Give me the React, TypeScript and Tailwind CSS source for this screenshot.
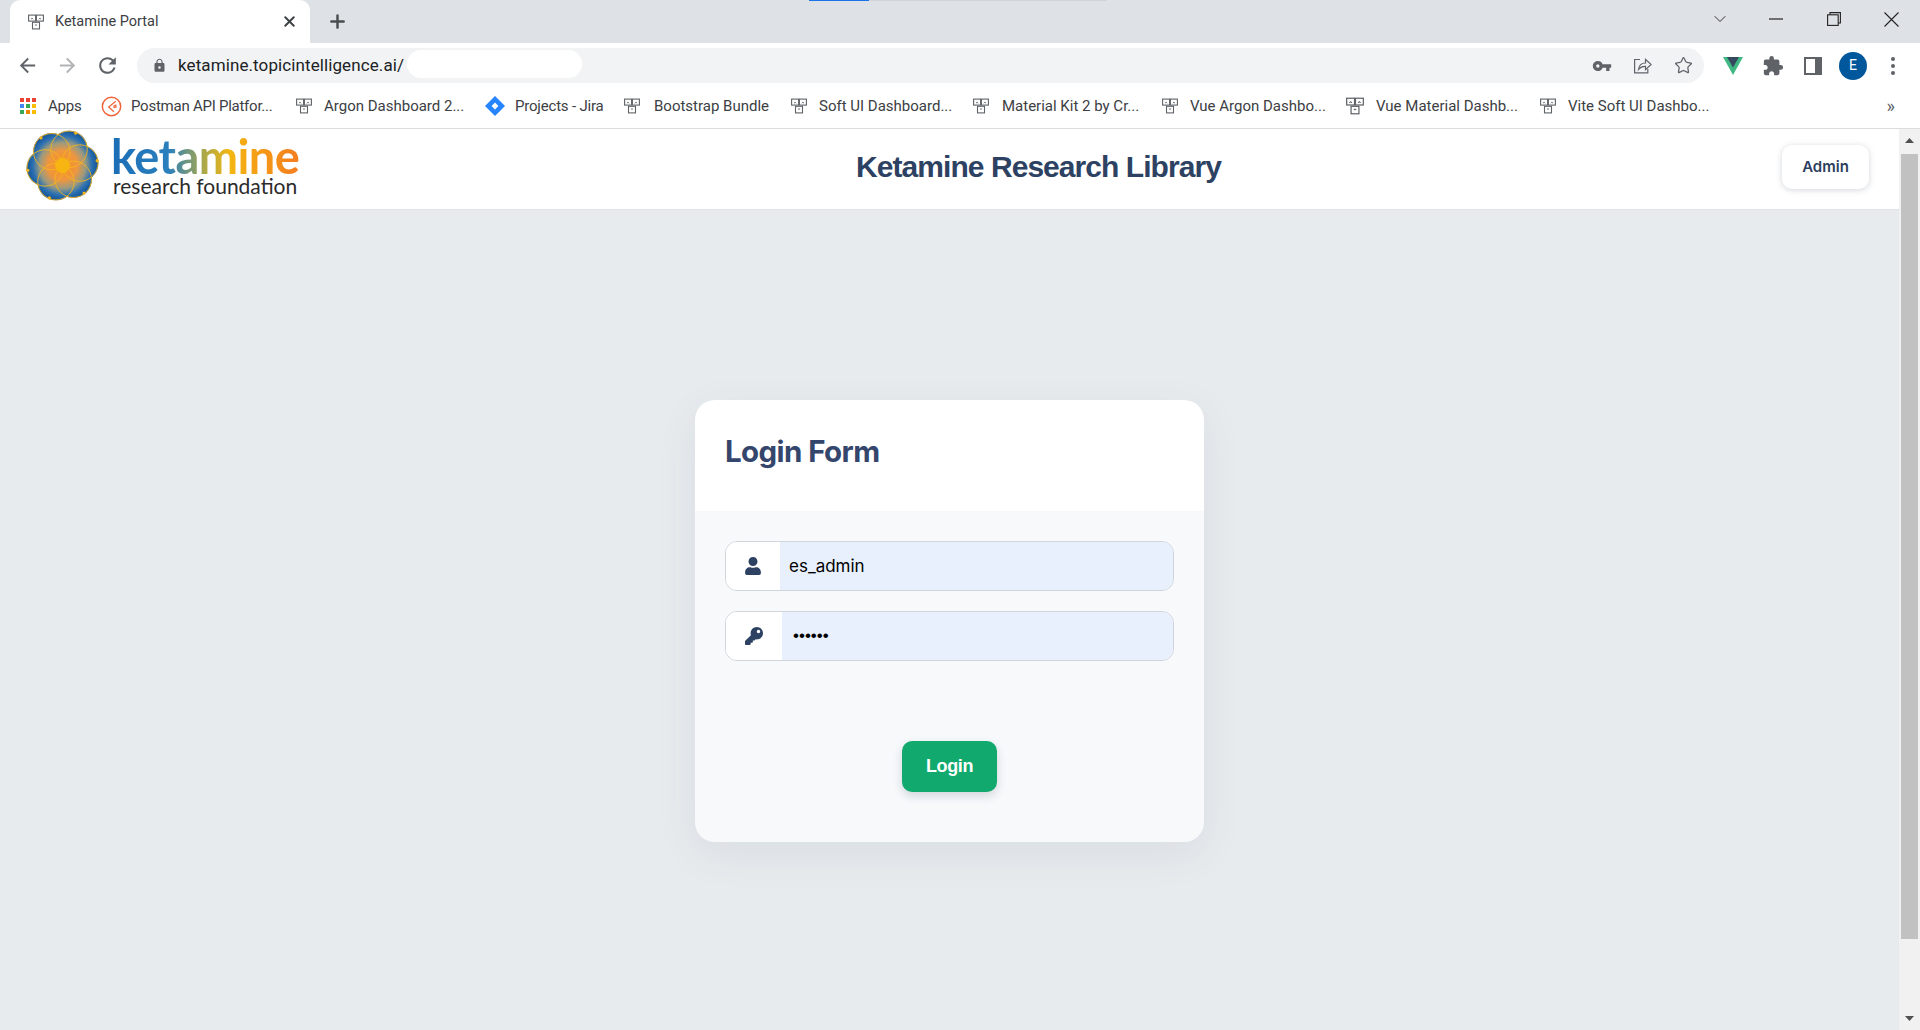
import { FaKey, FaUser } from "react-icons/fa";
import { MdArrowBack, MdArrowForward, MdExtension, MdLock, MdRefresh, MdVpnKey } from "react-icons/md";
import { Star, X, Plus, ChevronDown } from "lucide-react";

function Fav({ className = "" }: { className?: string }) {
  return (
    <svg viewBox="0 0 16 16" className={"w-4 h-4 shrink-0 " + className} fill="none" stroke="#5f6368" strokeWidth="1.1">
      <rect x="0.6" y="1.1" width="7" height="6" fill="#fff" />
      <rect x="8.4" y="1.1" width="7" height="6" fill="#fff" />
      <rect x="4.5" y="8.3" width="7" height="6.6" fill="#fff" />
      <path d="M3 5.200l1.100-1 1.100 1M10.800 5.200l1.100-1 1.100 1M6.900 10.500l1.100 1 1.100-1" strokeWidth="0.9" />
    </svg>
  );
}

function Apps() {
  const colors = ["#ea4335", "#ea4335", "#ea4335", "#4285f4", "#34a853", "#fbbc04", "#34a853", "#ea8600", "#fbbc04"];
  return (
    <div className="grid grid-cols-3 gap-[2px] w-[16px] shrink-0">
      {colors.map((c, i) => (
        <span key={i} style={{ background: c }} className="w-[4px] h-[4px]" />
      ))}
    </div>
  );
}

function Postman() {
  return (
    <svg viewBox="0 0 22 22" className="w-[21px] h-[21px] shrink-0" fill="none" stroke="#f0643c" strokeWidth="1.6">
      <circle cx="11" cy="11" r="9.600" />
      <path d="M15.500 5.500L8 11.500l5.500 5M13.500 10.500l2-1 .3 2-2 .5z" strokeWidth="1.300" />
    </svg>
  );
}

function Jira() {
  return (
    <svg viewBox="0 0 20 20" className="w-5 h-5 shrink-0">
      <path d="M10 0l10 10-10 10L0 10z" fill="#2684ff" />
      <path d="M10 6.600L13.400 10 10 13.400 6.600 10z" fill="#fff" />
    </svg>
  );
}

const bookmarks = [
  { icon: <Apps />, label: "Apps", cls: "ml-[20px] w-[81px] gap-[12px] tracking-[-0.2px]" },
  { icon: <Postman />, label: "Postman API Platfor...", cls: "w-[195px] gap-[9px] tracking-[-0.25px]" },
  { icon: <Fav />, label: "Argon Dashboard 2...", cls: "w-[189px] gap-[12px]" },
  { icon: <Jira />, label: "Projects - Jira", cls: "w-[139px] gap-[10px] tracking-[-0.2px]" },
  { icon: <Fav />, label: "Bootstrap Bundle", cls: "w-[167px] gap-[14px]" },
  { icon: <Fav />, label: "Soft UI Dashboard...", cls: "w-[182px] gap-[12px]" },
  { icon: <Fav />, label: "Material Kit 2 by Cr...", cls: "w-[189px] gap-[13px]" },
  { icon: <Fav />, label: "Vue Argon Dashbo...", cls: "w-[184px] gap-[12px]" },
  { icon: <Fav className="w-[18px]! h-[18px]!" />, label: "Vue Material Dashb...", cls: "w-[194px] gap-[12px]" },
  { icon: <Fav />, label: "Vite Soft UI Dashbo...", cls: "w-[170px] gap-[12px]" },
];

function Logo() {
  const petals = [0, 60, 120, 180, 240, 300].map((a) => {
    const r = ((a - 8) * Math.PI) / 180;
    return { x: 36.5 + 17.5 * Math.cos(r), y: 36.5 + 17.5 * Math.sin(r) };
  });
  return (
    <svg viewBox="0 0 73 73" className="w-[73px] h-[73px] shrink-0 -mt-[3px]">
      <defs>
        <radialGradient id="lg" gradientUnits="userSpaceOnUse" cx="36.5" cy="36.5" r="37">
          <stop offset="0" stopColor="#f7941d" />
          <stop offset="0.4" stopColor="#ee9640" />
          <stop offset="0.62" stopColor="#9a9a80" />
          <stop offset="0.8" stopColor="#2a70b2" />
          <stop offset="1" stopColor="#0f4c8c" />
        </radialGradient>
      </defs>
      {petals.map((p, i) => (
        <circle key={i} cx={p.x} cy={p.y} r="18.6" fill="url(#lg)" />
      ))}
      <circle cx="36.5" cy="36.5" r="20" fill="url(#lg)" />
      {petals.map((p, i) => (
        <circle key={i} cx={p.x} cy={p.y} r="18.2" fill="none" stroke="#f5b51c" strokeWidth="0.9" />
      ))}
      <circle cx="36.5" cy="36.5" r="7.5" fill="#f7b512" />
      {petals.map((p, i) => (
        <circle key={i} cx={36.5 + (p.x - 36.5) * 2} cy={36.5 + (p.y - 36.5) * 2} r="1.6" fill="#f5b51c" />
      ))}
    </svg>
  );
}

function Cell({ children, cls }: { children: React.ReactNode; cls: string }) {
  return <div className={"flex items-center justify-center bg-white shrink-0 " + cls}>{children}</div>;
}

export default function App() {
  return (
    <div className="relative h-[1030px] w-full overflow-hidden flex flex-col bg-white font-['Roboto',sans-serif]">
      {/* tab strip */}
      <div className="relative h-[43px] shrink-0 bg-[#dee1e6] flex items-end pl-[10px]">
        <div className="h-[43px] w-[300px] bg-white rounded-t-[10px] flex items-center pl-[18px] pr-[12px]">
          <Fav />
          <span className="ml-[11px] text-[14.5px] text-[#3c4043]">Ketamine Portal</span>
          <X className="ml-auto w-[17px] h-[17px] text-[#3c4043]" strokeWidth={2.8} />
        </div>
        <div className="h-[43px] flex items-center ml-[17px]">
          <Plus className="w-[21px] h-[21px] text-[#4a4d50]" strokeWidth={2.8} />
        </div>
        <div className="ml-auto h-[43px] flex items-center pb-[5px]">
          <ChevronDown className="w-[20px] h-[20px] text-[#222222] mr-[39px]" strokeWidth={1.1} />
          <svg viewBox="0 0 14 14" className="w-[14px] h-[14px] mr-[44px]" stroke="#222" fill="none"><path d="M0 7h14" strokeWidth="1.2" /></svg>
          <svg viewBox="0 0 14 14" className="w-[14px] h-[14px] mr-[43px]" stroke="#222" fill="none" strokeWidth="1.1"><rect x="0.6" y="2.8" width="10.6" height="10.6" /><path d="M3 2.8V.6h10.4V11h-2.2" /></svg>
          <svg viewBox="0 0 15 15" className="w-[15px] h-[15px] mr-[21px]" stroke="#222" fill="none" strokeWidth="1.1"><path d="M.5.5l14 14M14.500.5l-14 14" /></svg>
        </div>
        <div className="absolute top-0 left-[809px] h-[1px] w-[60px] bg-[#1a73e8]" />
        <div className="absolute top-0 left-[869px] h-[1px] w-[238px] bg-[#d0d3d8]" />
      </div>

      {/* toolbar */}
      <div className="relative h-[40px] shrink-0 bg-white flex items-start pl-[16px]">
        <div className="h-[45px] flex items-center text-[#5f6368]">
          <MdArrowBack className="w-[23px] h-[23px]" />
          <MdArrowForward className="w-[23px] h-[23px] ml-[17px] text-[#b1b3b6]" />
          <MdRefresh className="w-[25px] h-[25px] ml-[16px]" />
        </div>
        <div className="relative ml-[17px] mt-[5px] h-[35px] w-[1567px] rounded-full bg-[#f1f3f4] flex items-center pl-[15px] pr-[11px] text-[#5f6368]">
          <MdLock className="w-[15px] h-[15px]" />
          <span className="ml-[11px] text-[17px] text-[#202124] tracking-[0.1px]">ketamine.topicintelligence.ai/</span>
          <div className="absolute left-[270px] top-[2px] w-[175px] h-[28px] rounded-full bg-white" />
          <MdVpnKey className="ml-auto w-[20px] h-[20px]" />
          <svg viewBox="0 0 20 20" className="ml-[20px] w-[20px] h-[20px]" fill="none" stroke="#5f6368" strokeWidth="1.2">
            <path d="M8 3.500H2.600v13.400h13.200v-4" />
            <path d="M6.500 13.500c.5-4 3.400-6.500 7-6.500V3.300l5.600 5.200-5.600 5.200V10.300c-3-.2-5.300 1-7 3.200z" />
          </svg>
          <Star className="ml-[22px] w-[19px] h-[19px]" strokeWidth={1.6} />
        </div>
        <div className="h-[45px] flex items-center text-[#5f6368]">
          <svg viewBox="0 0 20 18" className="ml-[19px] w-[20px] h-[18px]">
            <path d="M0 0h20L10 18z" fill="#41b883" />
            <path d="M4 0h12l-6 10.500z" fill="#34495e" />
          </svg>
          <MdExtension className="ml-[19px] w-[22px] h-[22px]" />
          <svg viewBox="0 0 18 18" className="ml-[20px] w-[18px] h-[18px]"><path d="M0 0h18v18H0z" fill="#5f6368" /><path d="M2 2h9v14H2z" fill="#fff" /></svg>
          <div className="ml-[17px] w-[28px] h-[28px] rounded-full bg-[#01579b] flex items-center justify-center text-white text-[14px]">E</div>
          <div className="ml-[24px] flex flex-col gap-[3px]">
            <span className="w-[4px] h-[4px] rounded-full bg-[#5f6368]" />
            <span className="w-[4px] h-[4px] rounded-full bg-[#5f6368]" />
            <span className="w-[4px] h-[4px] rounded-full bg-[#5f6368]" />
          </div>
        </div>
      </div>

      {/* bookmarks */}
      <div className="relative h-[46px] shrink-0 bg-white border-b border-[#dadce0] flex items-center pt-[1px] text-[15px] text-[#3c4043]">
        {bookmarks.map((b) => (
          <div key={b.label} className={"flex items-center shrink-0 whitespace-nowrap " + b.cls}>
            {b.icon}
            <span>{b.label}</span>
          </div>
        ))}
        <span className="ml-auto mr-[25px] text-[18px] leading-none text-[#5f6368]">»</span>
      </div>

      {/* page */}
      <div className="flex-1 flex min-h-0">
        <div className="flex-1 flex flex-col min-w-0 bg-[#e7ebee]">
          <header className="h-[81px] shrink-0 bg-white border-b border-[#dee2e6] flex items-center justify-between pl-[26px] pr-[30px] pb-[4px]">
            <div className="flex items-center gap-[12px] -mt-[1px]">
              <Logo />
              <div className="flex flex-col font-['Lato',sans-serif] w-[192px]">
                <span className="text-[47px] leading-[38px] font-bold tracking-[-0.6px] text-transparent bg-clip-text bg-[linear-gradient(90deg,#1b6db6_0%,#2a80bd_30%,#a9a84a_48%,#f3b612_62%,#f59a17_78%,#f47a20_100%)]">ketamine</span>
                <span className="mt-[1px] ml-[2px] text-[21px] leading-[20px] text-[#2b2b2b] font-normal whitespace-nowrap">research foundation</span>
              </div>
            </div>
            <h1 className="ml-[-8px] -mt-[1px] text-[30px] font-bold text-[#2d4263] font-['Liberation_Sans',sans-serif] tracking-[-0.95px]">Ketamine Research Library</h1>
            <button className="w-[87px] h-[44px] rounded-[10px] bg-white shadow-[0_1px_6px_rgba(60,70,90,0.22)] text-[15px] font-semibold text-[#2d3e5e] font-['Inter',sans-serif]">Admin</button>
          </header>
          <main className="flex-1 flex items-center justify-center pt-[2px] font-['Inter',sans-serif]">
            <div className="w-[509px] rounded-[20px] overflow-hidden shadow-[0_12px_40px_rgba(60,80,100,0.08)]">
              <div className="h-[111px] bg-white pl-[30px] pt-[31px]">
                <h2 className="text-[29.5px] leading-[40px] font-bold text-[#34466b] tracking-[-0.6px]">Login Form</h2>
              </div>
              <div className="bg-[#f7f9fb] h-[331px] px-[30px] pt-[30px] flex flex-col">
                <div className="h-[50px] w-[449px] rounded-[12px] border border-[#d1d5db] overflow-hidden flex">
                  <Cell cls="w-[54px]"><FaUser className="w-[16px] h-[18px] text-[#2d4263]" /></Cell>
                  <input readOnly defaultValue="es_admin" className="flex-1 min-w-0 bg-[#e8f0fe] pl-[9px] pt-[1px] text-[17px] text-black outline-none" />
                </div>
                <div className="mt-[20px] h-[50px] w-[449px] rounded-[12px] border border-[#d1d5db] overflow-hidden flex">
                  <Cell cls="w-[56px]"><FaKey className="w-[18px] h-[18px] text-[#2d4263]" /></Cell>
                  <input readOnly type="password" defaultValue="123456" className="flex-1 min-w-0 bg-[#e8f0fe] pl-[11px] text-[17px] text-black outline-none font-['Liberation_Sans',sans-serif]" />
                </div>
                <button className="mt-[80px] self-center w-[95px] h-[51px] rounded-[10px] bg-[#11a96e] text-white font-bold text-[18px] tracking-[-0.4px] pb-[1px] shadow-[0_4px_10px_rgba(60,80,100,0.2)] font-['Liberation_Sans',sans-serif]">Login</button>
              </div>
            </div>
          </main>
        </div>
        <div className="w-[21px] shrink-0 bg-[#f1f1f1] flex flex-col items-center">
          <svg viewBox="0 0 9 5" className="w-[9px] h-[5px] mt-[9px] shrink-0"><path d="M4.500 0L9 5H0z" fill="#505050" /></svg>
          <div className="mt-[11px] w-[17px] h-[785px] bg-[#c1c1c1] shrink-0" />
          <svg viewBox="0 0 9 5" className="w-[9px] h-[5px] mt-[77px] shrink-0"><path d="M0 0h9L4.500 5z" fill="#505050" /></svg>
        </div>
      </div>
    </div>
  );
}
